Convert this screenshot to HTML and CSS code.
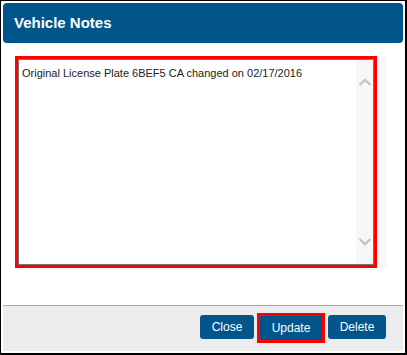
FILE: index.html
```html
<!DOCTYPE html>
<html>
<head>
<meta charset="utf-8">
<link rel="stylesheet" href="styles.css">
</head>
<body>
<div class="dialog">
  <div class="header">Vehicle Notes</div>
  <div class="content">
    <div class="note-row">
      <div class="highlight">
        <div class="notebox">
          <div class="note-text">Original License Plate 6BEF5 CA changed on 02/17/2016</div>
          <div class="scrollbar">
            <svg class="chev" width="14" height="8" viewBox="0 0 14 8"><path d="M1.5 7 L7 1.8 L12.5 7" fill="none" stroke="#c4c4c4" stroke-width="2.4"/></svg>
            <svg class="chev" width="14" height="8" viewBox="0 0 14 8"><path d="M1.5 1 L7 6.2 L12.5 1" fill="none" stroke="#c4c4c4" stroke-width="2.4"/></svg>
          </div>
        </div>
      </div>
      <div class="side-strip"></div>
    </div>
  </div>
  <div class="footer">
    <button class="btn">Close</button>
    <span class="btn-focus"><button class="btn btn-update">Update</button></span>
    <button class="btn">Delete</button>
  </div>
</div>
</body>
</html>
```
FILE: styles.css
```css
html, body {
  margin: 0;
  padding: 0;
  background: #fff;
}
body {
  width: 407px;
  height: 355px;
  overflow: hidden;
  font-family: "Liberation Sans", Arial, sans-serif;
}
.dialog {
  box-sizing: border-box;
  width: 407px;
  height: 355px;
  border-left: 1px solid #000;
  border-top: 1px solid #000;
  border-right: 2px solid #000;
  border-bottom: 2px solid #000;
  padding: 2px;
  display: flex;
  flex-direction: column;
  background: #fff;
}
.header {
  height: 40px;
  flex: none;
  background: #01558b;
  border-radius: 4px;
  color: #fff;
  font-weight: bold;
  font-size: 15px;
  line-height: 40px;
  padding-left: 11px;
}
.content {
  flex: 1;
  padding: 13px 0 0 12px;
}
.note-row {
  display: flex;
}
.highlight {
  border: 3px solid #ff0000;
  width: 356px;
  height: 206px;
}
.notebox {
  box-sizing: border-box;
  height: 100%;
  border: 1px solid #767676;
  background: #fff;
  display: flex;
}
.note-text {
  flex: 1;
  font-size: 11px;
  color: #222;
  padding: 7px 0 0 3px;
  line-height: 13px;
}
.scrollbar {
  width: 17px;
  background: #f7f7f7;
  display: flex;
  flex-direction: column;
  justify-content: space-between;
  align-items: center;
  padding: 18px 0 18px;
}
.chev {
  display: block;
}
.side-strip {
  width: 10px;
  background: #f9f9fb;
}
.footer {
  box-sizing: border-box;
  height: 46px;
  flex: none;
  border-top: 1px solid #ababab;
  background: #ececec;
  display: flex;
  justify-content: flex-end;
  align-items: flex-start;
  padding: 9px 17px 0 0;
}
.btn {
  font-family: "Liberation Sans", Arial, sans-serif;
  font-size: 12px;
  color: #fff;
  background: #01558b;
  border: none;
  border-radius: 3px;
  height: 24px;
  padding: 0;
  margin: 0;
  cursor: pointer;
}
.footer > .btn:first-child {
  width: 54px;
  margin-right: 3px;
}
.footer > .btn:last-child {
  width: 58px;
  margin-left: 3px;
}
.btn-focus {
  display: block;
  border: 3px solid #ff0000;
  margin-top: -2px;
  height: 24px;
}
.btn-update {
  width: 62px;
  display: block;
  border-radius: 0;
}
```
